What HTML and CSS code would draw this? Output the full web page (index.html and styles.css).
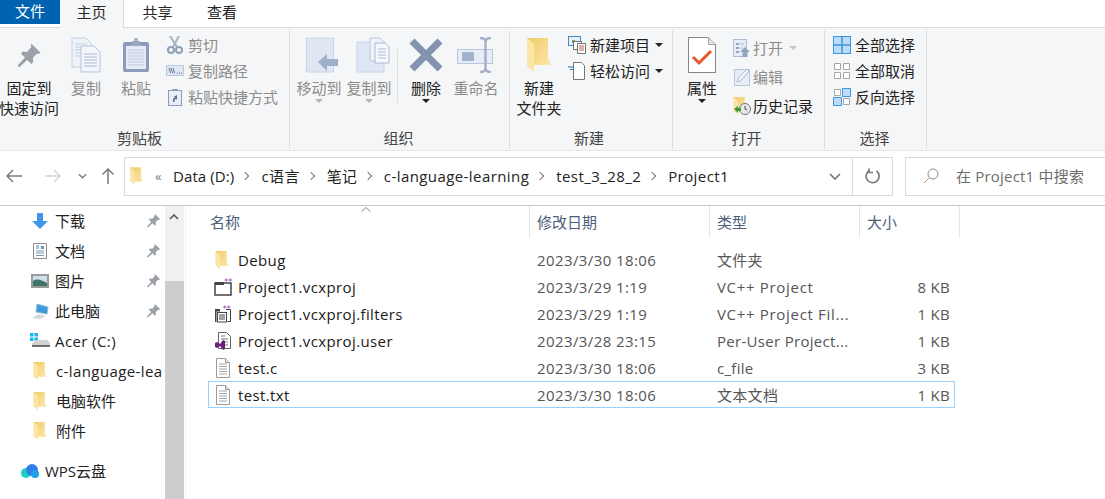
FILE: index.html
```html
<!DOCTYPE html>
<html lang="zh-CN">
<head>
<meta charset="utf-8">
<title>Project1</title>
<link rel="stylesheet" href="styles.css">
</head>
<body>
<svg class="defs" width="0" height="0" aria-hidden="true">
  <defs>
    <linearGradient id="fback" x1="0" y1="0" x2="1" y2="1">
      <stop offset="0" stop-color="#f0cb6c"/>
      <stop offset="1" stop-color="#fde7a6"/>
    </linearGradient>
    <symbol id="folder" viewBox="0 0 14 19">
      <path d="M0 0h12v12l2 3.500H5z" fill="url(#fback)"/>
      <path d="M0 0l5 4v15l-5-4z" fill="#fbe5a4"/>
    </symbol>
    <symbol id="pin" viewBox="0 0 16 16">
      <path d="M9.500 1l5.500 5.500-1 1-1-.4-2.600 2.600.2 2.600-1.200 1.200-2.500-2.500L2 15.500 1 14.500l4.500-4.900-2.500-2.500 1.200-1.200 2.600.2L9.400 3l-.4-1z" fill="#9aa1a8"/>
    </symbol>
    <symbol id="doc" viewBox="0 0 16 20">
      <path d="M1.500.5h9l4 4v15h-13z" fill="#fff" stroke="#9b9b9b"/>
      <path d="M10.500.5v4h4" fill="#e8e8e8" stroke="#9b9b9b"/>
      <path d="M4 6h8M4 8.500h8M4 11h8M4 13.500h8M4 16h8" stroke="#a5a5a5"/>
    </symbol>
  </defs>
</svg>

<header class="tabs">
  <div class="tab tab-file">文件</div>
  <div class="tab tab-active">主页</div>
  <div class="tab tab-share">共享</div>
  <div class="tab">查看</div>
</header>

<section class="ribbon">
  <div class="group g-clip">
    <div class="group-body">
      <div class="big w58 dark">
        <div class="big-icon pin-wrap"><svg class="i26" viewBox="0 0 16 16"><use href="#pin"/></svg></div>
        <span>固定到</span><span class="nowrap">快速访问</span>
      </div>
      <div class="big w56 off">
        <div class="big-icon">
          <svg class="i36" viewBox="0 0 32 36">
            <path d="M2 1h14l5 5v24H2z" fill="#eef2f9" stroke="#c5d0e3"/>
            <path d="M5 7h12M5 10h12M5 13h12M5 16h12M5 19h12" stroke="#c3cfe2"/>
            <path d="M11 9h13l6 6v20H11z" fill="#f3f6fb" stroke="#b5c3da"/>
            <path d="M14 17h13M14 20h13M14 23h13M14 26h13M14 29h13" stroke="#a9bad6"/>
          </svg>
        </div>
        <span>复制</span>
      </div>
      <div class="big w44 off">
        <div class="big-icon">
          <svg class="i36" viewBox="0 0 28 36">
            <rect x="1" y="5" width="26" height="30" rx="2" fill="#8b9bb9"/>
            <rect x="4" y="9" width="20" height="23" fill="#e4eaf5"/>
            <path d="M6 13h16M6 16h16M6 19h16M6 22h16M6 25h16M6 28h16" stroke="#bccae0"/>
            <path d="M10 7V4h2.500V1h3v3H18v3l2 2H8z" fill="#9aa8c2"/>
          </svg>
        </div>
        <span>粘贴</span>
      </div>
      <div class="small-list off">
        <div class="small"><svg class="i18" viewBox="0 0 18 18"><path d="M4 0l7 11M13 0L7 11" stroke="#a7b1c2" stroke-width="2" fill="none"/><circle cx="5" cy="14" r="3" fill="none" stroke="#8fa0ba" stroke-width="2"/><circle cx="13" cy="14" r="3" fill="none" stroke="#8fa0ba" stroke-width="2"/></svg><span>剪切</span></div>
        <div class="small"><svg class="i18" viewBox="0 0 18 18"><rect x=".5" y="3.500" width="17" height="10" fill="#dfe6f2" stroke="#bcc9de"/><path d="M3 6l1.500 5M5 6l1.500 5M7 6l1.500 5" stroke="#64748f"/><path d="M11 11h1M13 11h1M15 11h1" stroke="#64748f"/></svg><span>复制路径</span></div>
        <div class="small"><svg class="i18" viewBox="0 0 18 18"><rect x="2.500" y="2.500" width="13" height="15" fill="#e8edf6" stroke="#8b9bb9"/><path d="M6.500 3V1.500h5V3" fill="none" stroke="#8b9bb9"/><path d="M7 14v-3l2-2H7.500l3.500-2v5l-1-1.200L8.500 12v2z" fill="#5c6f8f"/></svg><span>粘贴快捷方式</span></div>
      </div>
    </div>
    <div class="group-label">剪贴板</div>
  </div>

  <div class="group g-org">
    <div class="group-body">
      <div class="big w50 off">
        <div class="big-icon shift">
          <svg class="i36" viewBox="0 0 34 36">
            <rect x=".5" y="1" width="27" height="34" fill="#dfe7f4" stroke="#c7d4e8"/>
            <path d="M12 25l9-8v5h11v7H21v5z" fill="#9fb0c9"/>
          </svg>
        </div>
        <span>移动到</span><i class="drop light"></i>
      </div>
      <div class="big w50 off">
        <div class="big-icon shift">
          <svg class="i36" viewBox="0 0 34 36">
            <path d="M1 5h27v30H1z" fill="#dfe7f4" stroke="#c7d4e8"/>
            <path d="M14 1h10l5 5v18H14z" fill="#eef2f9" stroke="#b9c6dc"/>
            <path d="M19 6h10l4 4v16H19z" fill="#f7f9fc" stroke="#a9bad6"/>
            <path d="M22 12h8M22 15h8M22 18h8M22 21h8" stroke="#a9bad6"/>
          </svg>
        </div>
        <span>复制到</span><i class="drop light"></i>
      </div>
      <div class="vsep"></div>
      <div class="big w50 dark">
        <div class="big-icon">
          <svg class="i36" viewBox="0 0 36 36"><path d="M4 4l28 28M32 4L4 32" stroke="#8392ae" stroke-width="7"/></svg>
        </div>
        <span>删除</span><i class="drop"></i>
      </div>
      <div class="big w48 off">
        <div class="big-icon">
          <svg class="i38" viewBox="0 0 38 36">
            <rect x=".5" y="12.500" width="35" height="14" fill="#e7edf7" stroke="#b9c6dc"/>
            <rect x="5" y="15" width="12" height="9" fill="#a4b4cc"/>
            <path d="M23 1c3 0 5 1 5.500 3C29 2 31 1 34 1M23 35c3 0 5-1 5.500-3 .5 2 2.500 3 5.500 3M28.500 4v28" fill="none" stroke="#a4b1c6" stroke-width="2.500"/>
          </svg>
        </div>
        <span>重命名</span>
      </div>
    </div>
    <div class="group-label">组织</div>
  </div>

  <div class="group g-new">
    <div class="group-body">
      <div class="big w56 dark">
        <div class="big-icon"><svg class="folder-big" viewBox="0 0 24 35"><path d="M0 1h21v20l3 7H7z" fill="url(#fback)"/><path d="M0 1l7 6v28l-7-6z" fill="#fce6a6"/></svg></div>
        <span>新建</span><span>文件夹</span>
      </div>
      <div class="small-list">
        <div class="small"><svg class="i18" viewBox="0 0 18 18"><rect x=".5" y=".5" width="12" height="9" fill="#e6eef8" stroke="#3f8fc5"/><path d="M4 4h3v3H4z" fill="#7d9b5e"/><rect x="5.500" y="5.500" width="8" height="8" fill="#fff" stroke="#777"/><rect x="9.500" y="7.500" width="8" height="10" fill="#fff" stroke="#777"/><path d="M11 10h5M11 12h5M11 14h5" stroke="#c45a5a"/></svg><span>新建项目</span><i class="caret"></i></div>
        <div class="small"><svg class="i18" viewBox="0 0 18 18"><path d="M5.500.5h8l3 3v14h-11z" fill="#fff" stroke="#777"/><path d="M0 5h6M2 7.500h4" stroke="#2d72ac" stroke-width="1.200"/></svg><span>轻松访问</span><i class="caret"></i></div>
      </div>
    </div>
    <div class="group-label">新建</div>
  </div>

  <div class="group g-open">
    <div class="group-body">
      <div class="big w58 dark">
        <div class="big-icon">
          <svg class="i36" viewBox="0 0 28 36"><path d="M.5.500h20l7 7v28H.500z" fill="#fff" stroke="#858585"/><path d="M20.500.500v7h7" fill="#e4e4e4" stroke="#a0a0a0"/><path d="M5 20l6 6 12-12" fill="none" stroke="#e9562a" stroke-width="3"/></svg>
        </div>
        <span>属性</span><i class="drop"></i>
      </div>
      <div class="small-list tall">
        <div class="small off"><svg class="i18" viewBox="0 0 18 18"><rect x=".5" y=".5" width="13" height="17" fill="#e7edf7" stroke="#aebdd4"/><path d="M3 4h3v2H3zM3 8h3v2H3zM3 12h3v2H3z" fill="#93a4bf"/><path d="M7 5h4M7 9h3" stroke="#aebdd4"/><path d="M7 13l5-5 5 5h-2.500v5h-5v-5z" fill="#93a4bf"/></svg><span>打开</span><i class="caret light"></i></div>
        <div class="small off"><svg class="i18" viewBox="0 0 18 18"><path d="M1.500 1.500h11l4 0v16h-15z" fill="#e7edf7" stroke="#b8c6dc"/><path d="M4 14l1-3 9-10 2 2-9 10z" fill="#fff" stroke="#a4b4cc"/></svg><span>编辑</span></div>
        <div class="small"><svg class="i18" viewBox="0 0 18 18"><use href="#folder" width="14" height="18"/><circle cx="12" cy="12" r="5.500" fill="#e8e8e8" stroke="#777"/><path d="M12 9v3l2 1" stroke="#444" fill="none"/><path d="M1 12l4-3v2h3v3H5v2z" fill="#3a9a35"/></svg><span>历史记录</span></div>
      </div>
    </div>
    <div class="group-label">打开</div>
  </div>

  <div class="group g-sel">
    <div class="group-body">
      <div class="small-list">
        <div class="small"><svg class="i18" viewBox="0 0 18 18"><rect x=".5" y=".5" width="17" height="17" fill="#bcdcf7" stroke="#3a96dd"/><path d="M9 0v18M0 9h18" stroke="#3a96dd" stroke-width="1.500"/></svg><span>全部选择</span></div>
        <div class="small"><svg class="i18" viewBox="0 0 18 18"><path d="M1.500 1.500h6v6h-6zM10.500 1.500h6v6h-6zM1.500 10.500h6v6h-6zM10.500 10.500h6v6h-6z" fill="#fff" stroke="#a6a6a6"/></svg><span>全部取消</span></div>
        <div class="small"><svg class="i18" viewBox="0 0 18 18"><path d="M1.500 1.500h6v6h-6zM10.500 10.500h6v6h-6z" fill="#fff" stroke="#a6a6a6"/><path d="M9.500.5h8v8h-8zM.5 9.500h8v8h-8z" fill="#bcdcf7" stroke="#3a96dd"/></svg><span>反向选择</span></div>
      </div>
    </div>
    <div class="group-label">选择</div>
  </div>
</section>

<nav class="addressbar">
  <svg class="nav-arrow back" viewBox="0 0 16 14"><path d="M1 7h15M7 1L1 7l6 6" fill="none" stroke="#7b7b7b" stroke-width="1.500"/></svg>
  <svg class="nav-arrow fwd" viewBox="0 0 16 14"><path d="M0 7h15M9 1l6 6-6 6" fill="none" stroke="#d4d4d4" stroke-width="1.500"/></svg>
  <svg class="nav-chev" viewBox="0 0 10 6"><path d="M1 1l4 4 4-4" fill="none" stroke="#7b7b7b" stroke-width="1.500"/></svg>
  <svg class="nav-up" viewBox="0 0 12 16"><path d="M6 16V1M.5 6.500L6 1l5.500 5.500" fill="none" stroke="#7b7b7b" stroke-width="1.500"/></svg>

  <div class="path">
    <svg class="path-folder"><use href="#folder"/></svg>
    <span class="dbl">«</span>
    <span class="crumb first">Data (D:)</span><i class="sep"></i>
    <span class="crumb">c语言</span><i class="sep"></i>
    <span class="crumb cjk">笔记</span><i class="sep"></i>
    <span class="crumb">c-language-learning</span><i class="sep"></i>
    <span class="crumb">test_3_28_2</span><i class="sep"></i>
    <span class="crumb">Project1</span>
    <svg class="path-chev" viewBox="0 0 12 7"><path d="M1 1l5 5 5-5" fill="none" stroke="#6e6e6e" stroke-width="1.500"/></svg>
    <div class="refresh">
      <svg viewBox="0 0 16 16" class="refresh-ico"><path d="M11.500 3A6.500 6.500 0 1 1 5 2.300" fill="none" stroke="#7b7b7b" stroke-width="1.700"/><path d="M4 .5v4h4" fill="none" stroke="#7b7b7b" stroke-width="1.500"/></svg>
    </div>
  </div>

  <div class="search">
    <svg class="search-ico" viewBox="0 0 16 16"><circle cx="10" cy="6" r="5" fill="none" stroke="#8b8b8b"/><path d="M6 10l-5 5" stroke="#c08a5c"/></svg>
    <span>在 Project1 中搜索</span>
  </div>
</nav>

<main class="content">
  <aside class="sidebar">
    <ul class="tree">
      <li class="node"><svg class="node-ico" viewBox="0 0 18 16"><path d="M6 0h6v8h5l-8 8-8-8h5z" fill="#3f95e6"/></svg><span>下载</span><svg class="pin-small" viewBox="0 0 16 16"><use href="#pin"/></svg></li>
      <li class="node"><svg class="node-ico" viewBox="0 0 18 16"><path d="M2.500.5h13v15h-13z" fill="#fff" stroke="#8d8d8d"/><path d="M5 3h3M5 5h3" stroke="#3f8fd0"/><path d="M5 8h8M5 10h8M5 12.500h8" stroke="#7897ad"/><path d="M10 3h3v3h-3z" fill="#6f94ad"/></svg><span>文档</span><svg class="pin-small" viewBox="0 0 16 16"><use href="#pin"/></svg></li>
      <li class="node"><svg class="node-ico" viewBox="0 0 18 16"><rect x="1" y="2" width="16" height="12" fill="#cfe0ea" stroke="#9a9a9a" stroke-width="2"/><path d="M2 8c4-3 8-1 14 2v3H2z" fill="#3f7567"/></svg><span>图片</span><svg class="pin-small" viewBox="0 0 16 16"><use href="#pin"/></svg></li>
      <li class="node"><svg class="node-ico" viewBox="0 0 18 16"><path d="M6 1l11 3-1 7-11-2z" fill="#3d9bdc" stroke="#8fb9d6"/><path d="M1 15l7-4 7 2-6 3z" fill="#d8d8d8"/></svg><span>此电脑</span><svg class="pin-small" viewBox="0 0 16 16"><use href="#pin"/></svg></li>
      <li class="node acer"><svg class="node-ico wide" viewBox="0 0 20 16"><path d="M0 0h3.500v3.500H0zM4.500 0H8v3.500H4.500zM0 4.500h3.500V8H0zM4.500 4.500H8V8H4.500z" fill="#19b5ee"/><path d="M2 10l4-3h11l3 3v4H2z" fill="#d2d2d2"/><path d="M2 12h18v2H2z" fill="#6f6f6f"/></svg><span>Acer (C:)</span></li>
      <li class="node"><svg class="node-ico folder"><use href="#folder"/></svg><span class="lat">c-language-lea</span></li>
      <li class="node"><svg class="node-ico folder"><use href="#folder"/></svg><span>电脑软件</span></li>
      <li class="node"><svg class="node-ico folder"><use href="#folder"/></svg><span>附件</span></li>
      <li class="node root"><svg class="node-ico cloud" viewBox="0 0 20 16"><circle cx="6" cy="10" r="5" fill="#1bd0c4"/><circle cx="12" cy="7" r="6" fill="#2f7fe8"/><circle cx="15" cy="11" r="4" fill="#1f9fe8"/></svg><span>WPS云盘</span></li>
    </ul>
    <div class="scrollbar">
      <div class="scroll-up"><svg viewBox="0 0 10 6" class="up-ico"><path d="M1 5l4-4 4 4" fill="none" stroke="#505050" stroke-width="1.500"/></svg></div>
      <div class="scroll-thumb"></div>
    </div>
  </aside>

  <section class="files">
    <div class="head">
      <svg class="sort" viewBox="0 0 10 5"><path d="M.5 4.500L5 .5l4.500 4" fill="none" stroke="#8a8a8a"/></svg>
      <div class="col c-name">名称</div>
      <div class="col c-date">修改日期</div>
      <div class="col c-type">类型</div>
      <div class="col c-size">大小</div>
    </div>
    <div class="rows">
      <div class="row">
        <span class="name"><svg class="file-ico folder16"><use href="#folder"/></svg>Debug</span><span class="date">2023/3/30 18:06</span><span class="type">文件夹</span><span class="size"></span>
      </div>
      <div class="row">
        <span class="name"><svg class="file-ico" viewBox="0 0 18 18"><path d="M1 5h16v12H1z" fill="#fff" stroke="#444" stroke-width="1.500"/><path d="M1 4h9v3H1z" fill="#444"/><path d="M10.500 2h3.500M12.200.5v3M14.500 2H18M16.200.5v3" stroke="#a35ab0"/></svg>Project1.vcxproj</span><span class="date">2023/3/29 1:19</span><span class="type wider">VC++ Project</span><span class="size">8 KB</span>
      </div>
      <div class="row">
        <span class="name"><svg class="file-ico" viewBox="0 0 18 18"><path d="M1.500 4.500h4M12 4.500h4.500v12h-3" fill="none" stroke="#444"/><path d="M1 4h5v2.500H1zM1 4h1.500v13H1z" fill="#444"/><rect x="3.500" y="7.500" width="9" height="9.500" fill="#fff" stroke="#444"/><path d="M5 10h6M5 12h6M5 14h6" stroke="#444"/><path d="M9 2h3.500M10.700.5v3M13 2h3.500M14.700.5v3" stroke="#a35ab0"/></svg>Project1.vcxproj.filters</span><span class="date">2023/3/29 1:19</span><span class="type wider">VC++ Project Fil...</span><span class="size">1 KB</span>
      </div>
      <div class="row">
        <span class="name"><svg class="file-ico" viewBox="0 0 18 18"><path d="M4.500.5h8l4 4v12h-12z" fill="#fff" stroke="#666"/><path d="M7 4h4M7 7h7M10 10h4M10 13h4" stroke="#777"/><path d="M1 11l2-1 3 2 3-4 2 1v8l-2 1-3-4-3 2-2-1z" fill="#68217a"/></svg>Project1.vcxproj.user</span><span class="date">2023/3/28 23:15</span><span class="type">Per-User Project...</span><span class="size">1 KB</span>
      </div>
      <div class="row">
        <span class="name"><svg class="file-ico doc"><use href="#doc"/></svg>test.c</span><span class="date">2023/3/30 18:06</span><span class="type">c_file</span><span class="size">3 KB</span>
      </div>
      <div class="row selected">
        <span class="name"><svg class="file-ico doc"><use href="#doc"/></svg>test.txt</span><span class="date">2023/3/30 18:06</span><span class="type">文本文档</span><span class="size">1 KB</span>
      </div>
    </div>
  </section>
</main>
</body>
</html>
```
FILE: styles.css
```css
* { box-sizing: border-box; }
html, body { margin: 0; padding: 0; }
body {
  width: 1105px;
  height: 499px;
  overflow: hidden;
  background: #fff;
  color: #222;
  font: 15px/20px "Open Sans", "Noto Sans CJK SC", sans-serif;
}
.defs { display: block; height: 0; }
svg { display: block; flex: none; }
.nowrap { white-space: nowrap; }

/* tabs */
.tabs { display: flex; height: 28px; border-bottom: 1px solid #dadbdc; }
.tab { width: 64px; height: 27px; line-height: 24px; text-align: center; color: #262626; }
.tab-file { width: 60px; height: 24px; background: #0063b1; color: #fff; line-height: 23px; }
.tab-active { height: 28px; background: #f5f6f7; border-right: 1px solid #dadbdc; position: relative; z-index: 1; }
.tab-share { width: 65px; margin-left: 1px; }

/* ribbon */
.ribbon { display: flex; height: 122px; background: #f5f6f7; padding-top: 2px; }
.group {
  display: flex; flex-direction: column; height: 119px;
  border-right: 1px solid #dfe0e1;
}
.g-clip { width: 290px; }
.g-org { width: 220px; }
.g-new { width: 163px; }
.g-open { width: 152px; }
.g-sel { width: 102px; }
.group-body { display: flex; flex: 1; align-items: flex-start; }
.group-label { height: 20px; text-align: center; line-height: 18px; color: #444; }
.g-clip .group-label { padding-right: 10px; }
.g-org .group-label { padding-right: 2px; }
.g-new .group-label { padding-right: 4px; }
.g-open .group-label { padding-right: 4px; }
.g-sel .group-label { padding-right: 2px; }

.big { display: flex; flex-direction: column; align-items: center; flex: none; line-height: 20px; }
.big-icon { height: 48px; padding-top: 7px; display: flex; justify-content: center; align-items: flex-start; }
.shift { padding-left: 8px; }
.dark { color: #222; }
.off { color: #8c8c8c; }
.w44 { width: 44px; }
.w48 { width: 50px; }
.w50 { width: 50px; }
.w56 { width: 56px; }
.w58 { width: 58px; }
.pin-wrap { padding-top: 12px; }
.i26 { width: 26px; height: 26px; }
.i36 { width: 36px; height: 36px; }
.i38 { width: 38px; height: 36px; }
.i18 { width: 18px; height: 18px; }
.folder-big { width: 24px; height: 35px; }

.small-list { display: flex; flex-direction: column; padding-top: 2px; flex: none; }
.small { display: flex; align-items: center; gap: 4px; height: 26px; white-space: nowrap; }
.tall { padding-top: 3px; }
.tall .small { height: 29px; gap: 2px; }

.g-clip .small-list { margin-left: 8px; }
.g-org .group-body { padding-left: 4px; }
.vsep { width: 1px; height: 54px; margin: 19px 3px 0; background: #dfe0e1; flex: none; }
.g-new .group-body { padding-left: 1px; }
.g-new .small-list { margin-left: 1px; }
.g-open .small-list { margin-left: 2px; }
.g-sel .small-list { margin-left: 8px; }

.drop { display: block; margin-top: 1px; width: 0; height: 0; border: 4px solid transparent; border-top-color: #222; border-bottom: 0; }
.drop.light { border-top-color: #b5b5b5; }
.caret { display: block; margin-left: 1px; width: 0; height: 0; border: 4px solid transparent; border-top-color: #222; border-bottom: 0; }
.caret.light { border-top-color: #c5c5c5; margin-left: 4px; }

/* address bar */
.addressbar {
  display: flex; align-items: center; height: 56px;
  border-top: 1px solid #e6e6e6;
  border-bottom: 1px solid #c8c8c8;
  padding: 0 0 4px 6px;
}
.nav-arrow { width: 16px; height: 14px; }
.fwd { margin-left: 23px; }
.nav-chev { width: 9px; height: 6px; margin-left: 17px; }
.nav-up { width: 12px; height: 16px; margin-left: 15px; }
.path {
  display: flex; align-items: center;
  width: 769px; height: 39px;
  margin-left: 10px;
  border: 1px solid #d9d9d9;
  padding-left: 5px;
  color: #222;
}
.path-folder { width: 13px; height: 18px; }
.dbl { margin-left: 12px; width: 18px; color: #777; font-size: 13px; }
.crumb { white-space: nowrap; letter-spacing: .42px; }
.crumb.first { letter-spacing: .1px; }
.crumb.cjk { letter-spacing: 0; }
.sep { display: block; width: 6px; height: 6px; border-top: 1.500px solid #777; border-right: 1.500px solid #777; transform: rotate(45deg); margin: 0 13px 0 8px; flex: none; }
.path-chev { width: 12px; height: 7px; margin-left: auto; margin-right: 11px; }
.refresh { width: 40px; height: 100%; border-left: 1px solid #d9d9d9; display: flex; align-items: center; justify-content: center; flex: none; }
.refresh-ico { width: 16px; height: 16px; }
.search {
  display: flex; align-items: center;
  flex: 1; height: 39px; margin-left: 12px;
  border: 1px solid #d9d9d9; border-right: 0;
  padding-left: 17px; color: #6d6d6d; white-space: nowrap;
  letter-spacing: .2px;
}
.search-ico { width: 16px; height: 16px; margin-right: 17px; }

/* content */
.content { display: flex; height: 293px; }
.sidebar { display: flex; width: 186px; flex: none; border-right: 1px solid #f0f0f0; overflow: hidden; }
.tree { list-style: none; margin: 0; padding: 0; width: 165px; flex: none; overflow: hidden; }
.node { display: flex; align-items: center; height: 30px; padding-left: 31px; position: relative; white-space: nowrap; }
.node-ico { width: 18px; height: 16px; margin-right: 6px; }
.node-ico.folder { width: 14px; height: 18px; margin: 0 9px 0 2px; }
.node-ico.wide { width: 20px; margin: 0 5px 0 -1px; }
.acer, .lat { letter-spacing: .4px; }
.root { margin-top: 10px; padding-left: 20px; }
.cloud { width: 20px; margin-right: 5px; }
.pin-small { position: absolute; left: 146px; top: 7px; width: 15px; height: 15px; }
.scrollbar { width: 19px; flex: none; display: flex; flex-direction: column; }
.scroll-up { height: 75px; background: #f0f0f0; padding: 8px 0 0 4px; }
.up-ico { width: 10px; height: 6px; }
.scroll-thumb { flex: 1; background: #cdcdcd; }

.files { flex: 1; position: relative; min-width: 0; }
.head { display: flex; height: 32px; color: #4c607a; line-height: 33px; }
.sort { position: absolute; left: 175px; top: 1px; width: 10px; height: 5px; }
.col { border-right: 1px solid #e5e5e5; padding-left: 7px; flex: none; }
.c-name { width: 344px; padding-left: 24px; }
.c-date { width: 180px; }
.c-type { width: 150px; }
.c-size { width: 100px; }
.rows { padding: 8px 0 0 22px; }
.row {
  display: flex; align-items: center; height: 27px; width: 747px;
  border: 1px solid transparent;
}
.row.selected { border-color: #99d1ff; }
.name { display: flex; align-items: center; width: 328px; flex: none; white-space: nowrap; color: #1a1a1a; letter-spacing: .38px; }
.file-ico { width: 18px; height: 18px; margin: 0 6px 0 5px; }
.file-ico.folder16 { width: 14px; height: 18px; margin: 0 9px 0 6px; }
.file-ico.doc { width: 16px; height: 20px; margin: 0 7px 0 6px; }
.date { width: 180px; flex: none; color: #555; letter-spacing: .4px; }
.type { width: 150px; flex: none; color: #555; white-space: nowrap; overflow: hidden; letter-spacing: .3px; }
.type.wider { letter-spacing: .68px; }
.size { width: 83px; flex: none; text-align: right; color: #555; letter-spacing: .3px; }
```
